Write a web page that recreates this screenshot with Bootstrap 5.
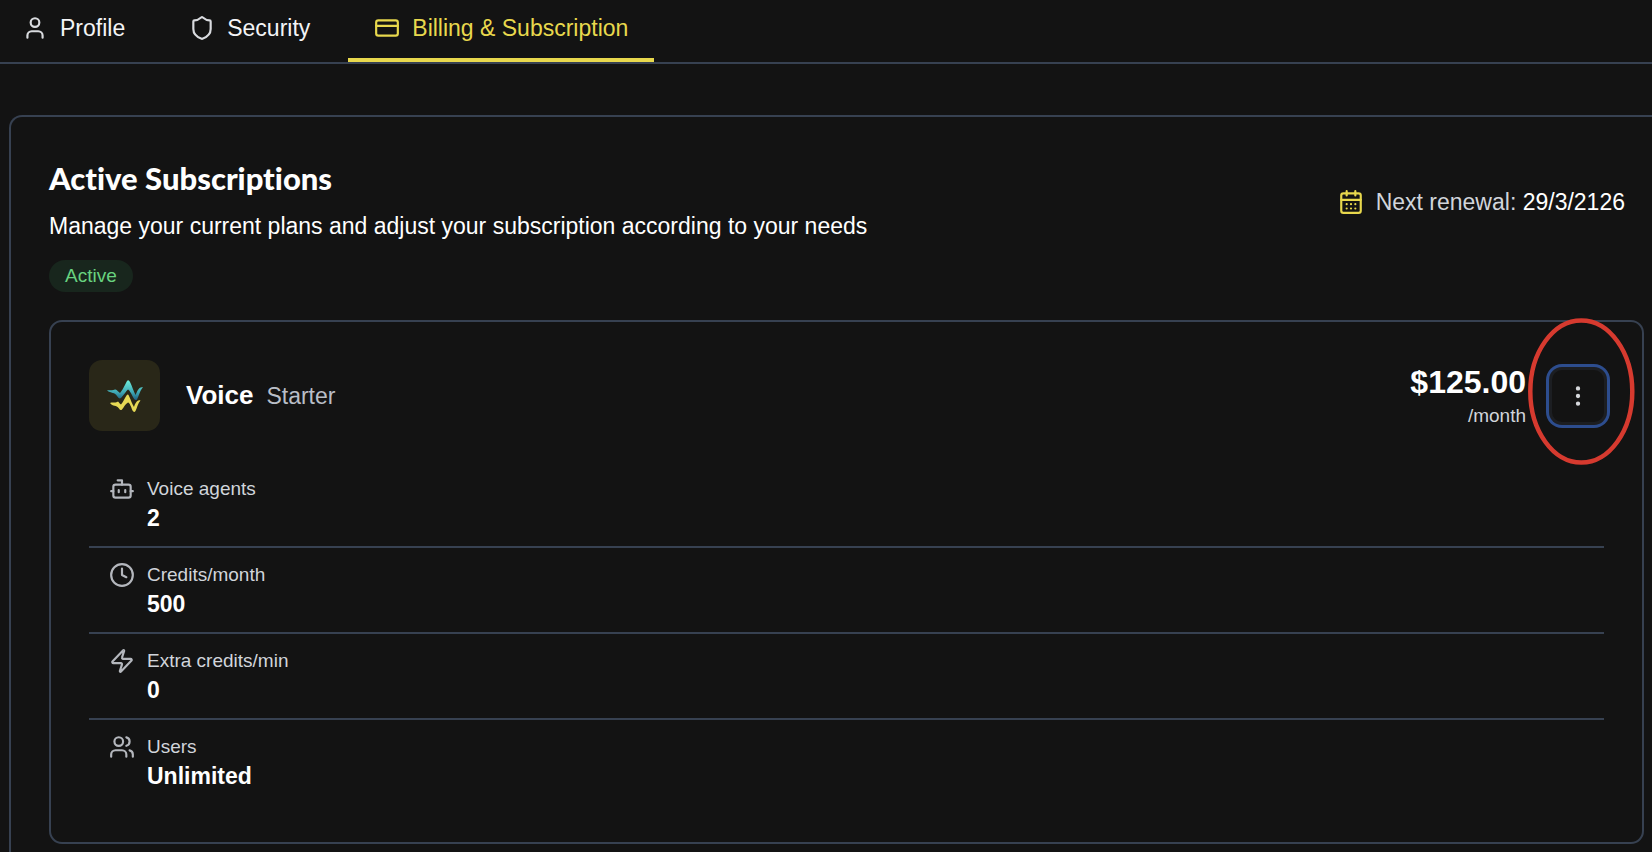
<!DOCTYPE html>
<html lang="en" data-bs-theme="dark">
<head>
<meta charset="utf-8">
<meta name="viewport" content="width=device-width, initial-scale=1">
<title>Billing &amp; Subscription</title>
<link href="https://cdn.jsdelivr.net/npm/bootstrap@5.3.0/dist/css/bootstrap.min.css" rel="stylesheet">
<style>
  :root { --line: #374151; --accent: #e8d84d; --soft: #d1d5db; }
  body { background: #131313; color: #fff; font-family: "Liberation Sans", Arial, sans-serif; font-size: 23px; }
  svg.ico { width: 26px; height: 26px; flex: none; fill: none; stroke: currentColor; stroke-width: 2; stroke-linecap: round; stroke-linejoin: round; }
  .tabs-bar { height: 64px; border-bottom: 2px solid var(--line); gap: 12px; overflow: hidden; }
  .tab-item { gap: 12px; padding: 0 26px 2px; color: #f3f4f6; border-bottom: 4px solid transparent; }
  .tab-item svg { color: #d9dbdf; }
  .tab-item:first-child { padding-left: 22px; }
  .tab-item.active, .tab-item.active svg { color: var(--accent); border-color: var(--accent); }
  .panel { margin: 51px 0 0 9px; padding: 38px 8px 0 38px; border: 2px solid var(--line); border-width: 2px 0 0 2px; border-top-left-radius: 13px; }
  .panel-title { font-family: Lato, sans-serif; font-weight: 900; font-size: 31px; line-height: 46px; font-variant-ligatures: none; }
  .panel-text { line-height: 46px; margin-top: 2px; }
  .renewal { gap: 12px; padding-right: 19px; color: var(--soft); }
  .renewal svg { color: var(--accent); }
  .status-pill { background: #18261d; color: #68d27f; font-size: 19px; line-height: 32px; padding: 0 16px; margin: 11px 0 28px; }
  .plan { border: 2px solid var(--line); border-radius: 13px; padding: 38px; }
  .plan-head { margin-bottom: 31px; }
  .plan-tile { width: 71px; height: 71px; border-radius: 13px; background: #292718; margin-right: 26px; }
  .plan-label { gap: 13px; }
  .plan-name { font-size: 26px; line-height: 34px; font-weight: 700; }
  .plan-tier { line-height: 34px; color: #b9bec7; }
  .price { font-size: 32px; line-height: 40px; font-weight: 700; }
  .period { font-size: 19px; line-height: 28px; color: var(--soft); }
  .menu-wrap { margin-left: 26px; }
  .menu-btn { width: 52px; height: 52px; padding: 0; border: 0; border-radius: 10px; background: #131313; color: #d6d8dc; box-shadow: 0 0 0 3px #1c1e22, 0 0 0 6px #2d4d8e; }
  .marker { left: 50%; top: 50%; width: 110px; height: 150px; transform: translate(-47%, -53%); pointer-events: none; }
  .feature { gap: 12px; padding: 12px 20px 13px; border-bottom: 2px solid var(--line); }
  .feature:last-child { border-bottom: 0; }
  .feature dt { font-weight: 400; font-size: 19px; line-height: 29px; color: var(--soft); }
  .feature dd { font-weight: 700; line-height: 30px; }
  .feature svg { color: #b4b7bd; margin-top: 2px; }
</style>
</head>
<body class="min-vh-100 d-flex flex-column">
<nav class="tabs-bar d-flex flex-shrink-0">
  <a href="#profile" class="tab-item d-flex align-items-center text-decoration-none">
    <svg class="ico" viewBox="0 0 24 24"><path d="M19 21v-2a4 4 0 0 0-4-4H9a4 4 0 0 0-4 4v2"/><circle cx="12" cy="7" r="4"/></svg>Profile</a>
  <a href="#security" class="tab-item d-flex align-items-center text-decoration-none">
    <svg class="ico" viewBox="0 0 24 24"><path d="M20 13c0 5-3.5 7.5-7.660 8.950a1 1 0 0 1-.67-.01C7.500 20.500 4 18 4 13V6a1 1 0 0 1 1-1c2 0 4.500-1.200 6.240-2.720a1.170 1.170 0 0 1 1.520 0C14.510 3.810 17 5 19 5a1 1 0 0 1 1 1z"/></svg>Security</a>
  <a href="#billing" class="tab-item active d-flex align-items-center text-decoration-none" aria-current="page">
    <svg class="ico" viewBox="0 0 24 24"><rect x="2" y="5" width="20" height="14" rx="2"/><path d="M2 10h20"/></svg>Billing &amp; Subscription</a>
</nav>

<main class="panel flex-grow-1">
  <header class="d-flex justify-content-between align-items-center">
    <div>
      <h1 class="panel-title mb-0">Active Subscriptions</h1>
      <p class="panel-text mb-0">Manage your current plans and adjust your subscription according to your needs</p>
    </div>
    <div class="renewal d-flex align-items-center">
      <svg class="ico" viewBox="0 0 24 24"><path d="M8 2v4M16 2v4M3 10h18M8 14h.01M12 14h.01M16 14h.01M8 18h.01M12 18h.01M16 18h.01"/><rect x="3" y="4" width="18" height="18" rx="2"/></svg>
      <span>Next renewal: <span class="text-white">29/3/2126</span></span>
    </div>
  </header>
  <div class="d-flex"><span class="status-pill rounded-pill">Active</span></div>

  <section class="plan">
    <div class="plan-head d-flex align-items-center">
      <div class="plan-tile d-flex align-items-center justify-content-center">
        <svg width="38" height="34" viewBox="0 0 38 34" aria-hidden="true">
          <defs>
            <linearGradient id="teal" x1="0" y1="0" x2="0" y2="1"><stop offset="0" stop-color="#6ff0dc"/><stop offset=".6" stop-color="#3fa9b5"/><stop offset="1" stop-color="#1d5f80"/></linearGradient>
          </defs>
          <path d="M1 11.500C4 10.500 6 12 9 10.500C11 10 12 13 14 14C16 12 19 6 21 2Q22.500 0 24 3C26 7 28 13 29.500 16C31 13 33 7 37 8.500C34 11 33 17 31 20.500Q29 22 27.500 19C25 14 23 10.500 22 10.500C20 12 18 16 15 19Q13 20.500 11 17C9 13 5 14.500 1 11.500Z" fill="url(#teal)"/>
          <path d="M4 24C7 22.500 9 24.500 12 22.500C13 23.500 14 25 15 25.500C17 23.500 19 18.500 20.500 16.500Q22 14.500 23 17C25 21 26 25 28 28C29 25 31 20 34.500 21.500C32 24 31 29 29.500 32Q28 34 26.500 31.500C25 28 24 24 22 23.500C19 25.500 18 28 16 30.500Q14.500 32 13 29.500C10 25.500 7 28 4 24Z" fill="#e6d955"/>
        </svg>
      </div>
      <div class="plan-label d-flex align-items-baseline flex-grow-1">
        <h2 class="plan-name mb-0">Voice</h2><span class="plan-tier">Starter</span>
      </div>
      <div class="text-end">
        <div class="price">$125.00</div>
        <div class="period">/month</div>
      </div>
      <div class="menu-wrap position-relative">
        <button type="button" class="menu-btn d-flex align-items-center justify-content-center" aria-label="Plan options">
          <svg class="ico" viewBox="0 0 24 24"><circle cx="12" cy="12" r="1"/><circle cx="12" cy="5" r="1"/><circle cx="12" cy="19" r="1"/></svg>
        </button>
        <svg class="marker position-absolute" viewBox="0 0 110 150" aria-hidden="true"><ellipse cx="55" cy="75" rx="51" ry="71" fill="none" stroke="#d63a2f" stroke-width="4.500"/></svg>
      </div>
    </div>

    <div>
      <div class="feature d-flex">
        <svg class="ico" viewBox="0 0 24 24"><path d="M12 8V4H8"/><rect x="4" y="8" width="16" height="12" rx="2"/><path d="M2 14h2M20 14h2M15 13v2M9 13v2"/></svg>
        <dl class="mb-0"><dt>Voice agents</dt><dd class="mb-0">2</dd></dl>
      </div>
      <div class="feature d-flex">
        <svg class="ico" viewBox="0 0 24 24"><circle cx="12" cy="12" r="10"/><path d="M12 6v6l4 2"/></svg>
        <dl class="mb-0"><dt>Credits/month</dt><dd class="mb-0">500</dd></dl>
      </div>
      <div class="feature d-flex">
        <svg class="ico" viewBox="0 0 24 24"><path d="M4 14a1 1 0 0 1-.78-1.630l9.900-10.200a.5.5 0 0 1 .86.46l-1.920 6.020A1 1 0 0 0 13 10h7a1 1 0 0 1 .78 1.630l-9.900 10.200a.5.5 0 0 1-.86-.46l1.920-6.020A1 1 0 0 0 11 14z"/></svg>
        <dl class="mb-0"><dt>Extra credits/min</dt><dd class="mb-0">0</dd></dl>
      </div>
      <div class="feature d-flex">
        <svg class="ico" viewBox="0 0 24 24"><path d="M16 21v-2a4 4 0 0 0-4-4H6a4 4 0 0 0-4 4v2"/><circle cx="9" cy="7" r="4"/><path d="M22 21v-2a4 4 0 0 0-3-3.870M16 3.130a4 4 0 0 1 0 7.750"/></svg>
        <dl class="mb-0"><dt>Users</dt><dd class="mb-0">Unlimited</dd></dl>
      </div>
    </div>
  </section>
</main>
<script src="https://cdn.jsdelivr.net/npm/bootstrap@5.3.0/dist/js/bootstrap.bundle.min.js"></script>
</body>
</html>
